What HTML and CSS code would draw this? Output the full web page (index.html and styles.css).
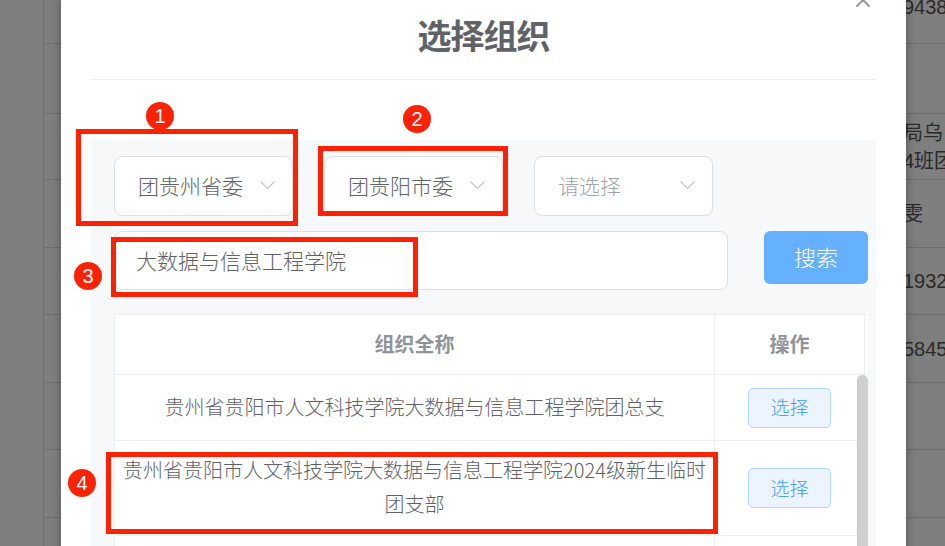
FILE: index.html
```html
<!DOCTYPE html>
<html lang="zh-CN">
<head>
<meta charset="utf-8">
<title>选择组织</title>
<link rel="stylesheet" href="styles.css">
</head>
<body>
<div class="page">
  <aside class="side"></aside>
  <main class="list">
    <div class="bg-row"><span></span><span class="cell top">9438</span></div>
    <div class="bg-row"><span></span><span class="cell"></span></div>
    <div class="bg-row"><span></span><span class="cell">局乌<br>4班团</span></div>
    <div class="bg-row"><span></span><span class="cell">雯</span></div>
    <div class="bg-row"><span></span><span class="cell">1932</span></div>
    <div class="bg-row"><span></span><span class="cell">5845</span></div>
    <div class="bg-row"><span></span><span class="cell"></span></div>
    <div class="bg-row"><span></span><span class="cell"></span></div>
    <div class="bg-row"><span></span><span class="cell"></span></div>
  </main>
</div>
<div class="mask"></div>
<div class="dialog">
  <header class="dlg-head">
    <h2 class="dlg-title">选择组织</h2>
    <svg class="close" width="14" height="14" viewBox="0 0 14 14"><path d="M1 1 L13 13 M13 1 L1 13" stroke="#909399" stroke-width="1.8" fill="none" stroke-linecap="round"/></svg>
  </header>
  <section class="panel">
    <div class="selects">
      <div class="select"><span>团贵州省委</span><svg class="chev" width="15" height="9" viewBox="0 0 15 9"><polyline points="0.5,0.5 7.5,7.5 14.5,0.5" fill="none" stroke="#c0c4cc" stroke-width="1.2"/></svg></div>
      <div class="select"><span>团贵阳市委</span><svg class="chev" width="15" height="9" viewBox="0 0 15 9"><polyline points="0.5,0.5 7.5,7.5 14.5,0.5" fill="none" stroke="#c0c4cc" stroke-width="1.2"/></svg></div>
      <div class="select placeholder"><span>请选择</span><svg class="chev" width="15" height="9" viewBox="0 0 15 9"><polyline points="0.5,0.5 7.5,7.5 14.5,0.5" fill="none" stroke="#c0c4cc" stroke-width="1.2"/></svg></div>
    </div>
    <div class="search">
      <input class="input" type="text" value="大数据与信息工程学院">
      <button class="btn-search">搜索</button>
    </div>
    <div class="table">
      <div class="thead">
        <div class="th">组织全称</div>
        <div class="th">操作</div>
        <div class="th gutter"></div>
      </div>
      <div class="trow">
        <div class="td">贵州省贵阳市人文科技学院大数据与信息工程学院团总支</div>
        <div class="td op"><button class="pick">选择</button></div>
        <div class="td gutter"></div>
      </div>
      <div class="trow">
        <div class="td">贵州省贵阳市人文科技学院大数据与信息工程学院2024级新生临时团支部</div>
        <div class="td op"><button class="pick">选择</button></div>
        <div class="td gutter"></div>
      </div>
      <div class="trow">
        <div class="td"></div>
        <div class="td op"></div>
        <div class="td gutter"></div>
      </div>
      <div class="thumb"></div>
    </div>
  </section>
</div>
<div class="marks">
  <div class="mark-box b1"></div>
  <div class="mark-box b2"></div>
  <div class="mark-box b3"></div>
  <div class="mark-box b4"></div>
  <div class="badge n1">1</div>
  <div class="badge n2">2</div>
  <div class="badge n3">3</div>
  <div class="badge n4">4</div>
</div>
</body>
</html>
```
FILE: styles.css
```css
* { box-sizing: border-box; margin: 0; padding: 0; }
html, body { width: 945px; height: 546px; overflow: hidden; }
body {
  position: relative;
  background: #fff;
  font-family: "Noto Sans CJK SC", "Noto Sans", sans-serif;
}

/* background page */
.page { display: grid; grid-template-columns: 44px 1fr; height: 546px; }
.side { border-right: 1px solid #e0e0e0; }
.list { display: flex; flex-direction: column; }
.bg-row {
  display: grid;
  grid-template-columns: 859px 1fr;
  align-items: center;
  border-bottom: 1px solid #dcdcdc;
  font-family: "Liberation Sans", "Noto Sans CJK SC", sans-serif;
  font-size: 20px;
  line-height: 28px;
  color: #555;
  white-space: nowrap;
  overflow: hidden;
  flex: none;
}
.bg-row:nth-child(1) { height: 44px; align-items: start; }
.bg-row:nth-child(2) { height: 70px; }
.bg-row:nth-child(3) { height: 66px; }
.bg-row:nth-child(4) { height: 68px; }
.bg-row:nth-child(5) { height: 67px; }
.bg-row:nth-child(6) { height: 68px; }
.bg-row:nth-child(7) { height: 67px; }
.bg-row:nth-child(8) { height: 68px; }
.bg-row:nth-child(9) { height: 68px; }
.cell.top { line-height: 15px; }

.mask { position: absolute; inset: 0; background: rgba(0, 0, 0, 0.5); }

/* dialog */
.dialog {
  position: absolute;
  left: 61px;
  top: 0;
  width: 845px;
  height: 620px;
  background: #fff;
  box-shadow: 0 0 10px rgba(0, 0, 0, 0.35);
}
.dlg-head {
  position: relative;
  height: 80px;
  margin: 0 30px;
  border-bottom: 1px solid #eeeeee;
  display: flex;
  align-items: center;
  justify-content: center;
  padding-bottom: 9px;
}
.dlg-title {
  font-size: 34px;
  font-weight: 700;
  line-height: 1;
  color: #606266;
  letter-spacing: -1px;
}
.close { position: absolute; left: 765px; top: -7px; }

.panel {
  margin: 60px 30px 0;
  height: 600px;
  background: #f7f8fa;
  padding: 16px 8px 0 23px;
}
.selects { display: flex; gap: 31px; }
.select {
  width: 179px;
  height: 60px;
  border: 1px solid #dcdfe6;
  border-radius: 8px;
  background: #fff;
  display: flex;
  align-items: center;
  justify-content: space-between;
  padding: 0 17px 2px 23px;
  font-size: 21px;
  font-weight: 300;
  color: #606266;
}
.select.placeholder { color: #a0a3a9; }
.chev { display: block; }

.search { display: flex; align-items: flex-start; gap: 36px; margin-top: 15px; }
.input {
  width: 614px;
  height: 59px;
  border: 1px solid #dcdfe6;
  border-radius: 8px;
  background: #fff;
  padding: 0 21px 2px;
  font-family: inherit;
  font-size: 21px;
  font-weight: 300;
  color: #606266;
  outline: none;
}
.btn-search {
  width: 104px;
  height: 53px;
  border: none;
  border-radius: 6px;
  background: #66b1ff;
  color: #fff;
  font-family: inherit;
  font-size: 22px;
  font-weight: 300;
  padding-bottom: 4px;
}

.table {
  position: relative;
  margin-top: 24px;
  width: 754px;
  border-left: 1px solid #ebeef5;
  border-top: 1px solid #ebeef5;
  background: #fff;
}
.thead, .trow { display: grid; grid-template-columns: 600px 150px 3px; }
.th {
  height: 60px;
  border-bottom: 1px solid #ebeef5;
  border-right: 1px solid #ebeef5;
  display: flex;
  align-items: center;
  justify-content: center;
  padding-bottom: 2px;
  font-size: 20px;
  font-weight: 700;
  color: #909399;
}
.td {
  min-height: 66px;
  border-bottom: 1px solid #ebeef5;
  border-right: 1px solid #ebeef5;
  display: flex;
  align-items: center;
  justify-content: center;
  padding: 12px 5px 14px;
  text-align: center;
  font-size: 20px;
  font-weight: 300;
  line-height: 34px;
  color: #606266;
}
.td.op { padding: 0; }
.gutter { border-right: none; padding: 0; }
.pick {
  width: 83px;
  height: 40px;
  border: 1px solid #b3d8ff;
  border-radius: 5px;
  background: #ecf5ff;
  color: #409eff;
  font-family: inherit;
  font-size: 19px;
  font-weight: 300;
  padding-bottom: 2px;
}
.thumb {
  position: absolute;
  right: 0;
  top: 60px;
  width: 11px;
  height: 400px;
  border-radius: 6px;
  background: #d0d0d0;
  border-left: 1px solid #c4c4c4;
}

/* annotations */
.marks { position: absolute; inset: 0; pointer-events: none; }
.mark-box { position: absolute; border: 5px solid #ff2200; }
.b1 { left: 76px; top: 129px; width: 222px; height: 97px; }
.b2 { left: 318px; top: 146px; width: 190px; height: 70px; }
.b3 { left: 111px; top: 237px; width: 307px; height: 60px; }
.b4 { left: 106px; top: 452px; width: 612px; height: 82px; }
.badge {
  position: absolute;
  width: 28px;
  height: 28px;
  border-radius: 50%;
  background: #ff2200;
  color: #fff;
  font-family: "Liberation Sans", sans-serif;
  font-size: 20px;
  line-height: 28px;
  text-align: center;
}
.n1 { left: 146px; top: 102px; }
.n2 { left: 403px; top: 105px; }
.n3 { left: 74px; top: 262px; }
.n4 { left: 68px; top: 469px; }
```
